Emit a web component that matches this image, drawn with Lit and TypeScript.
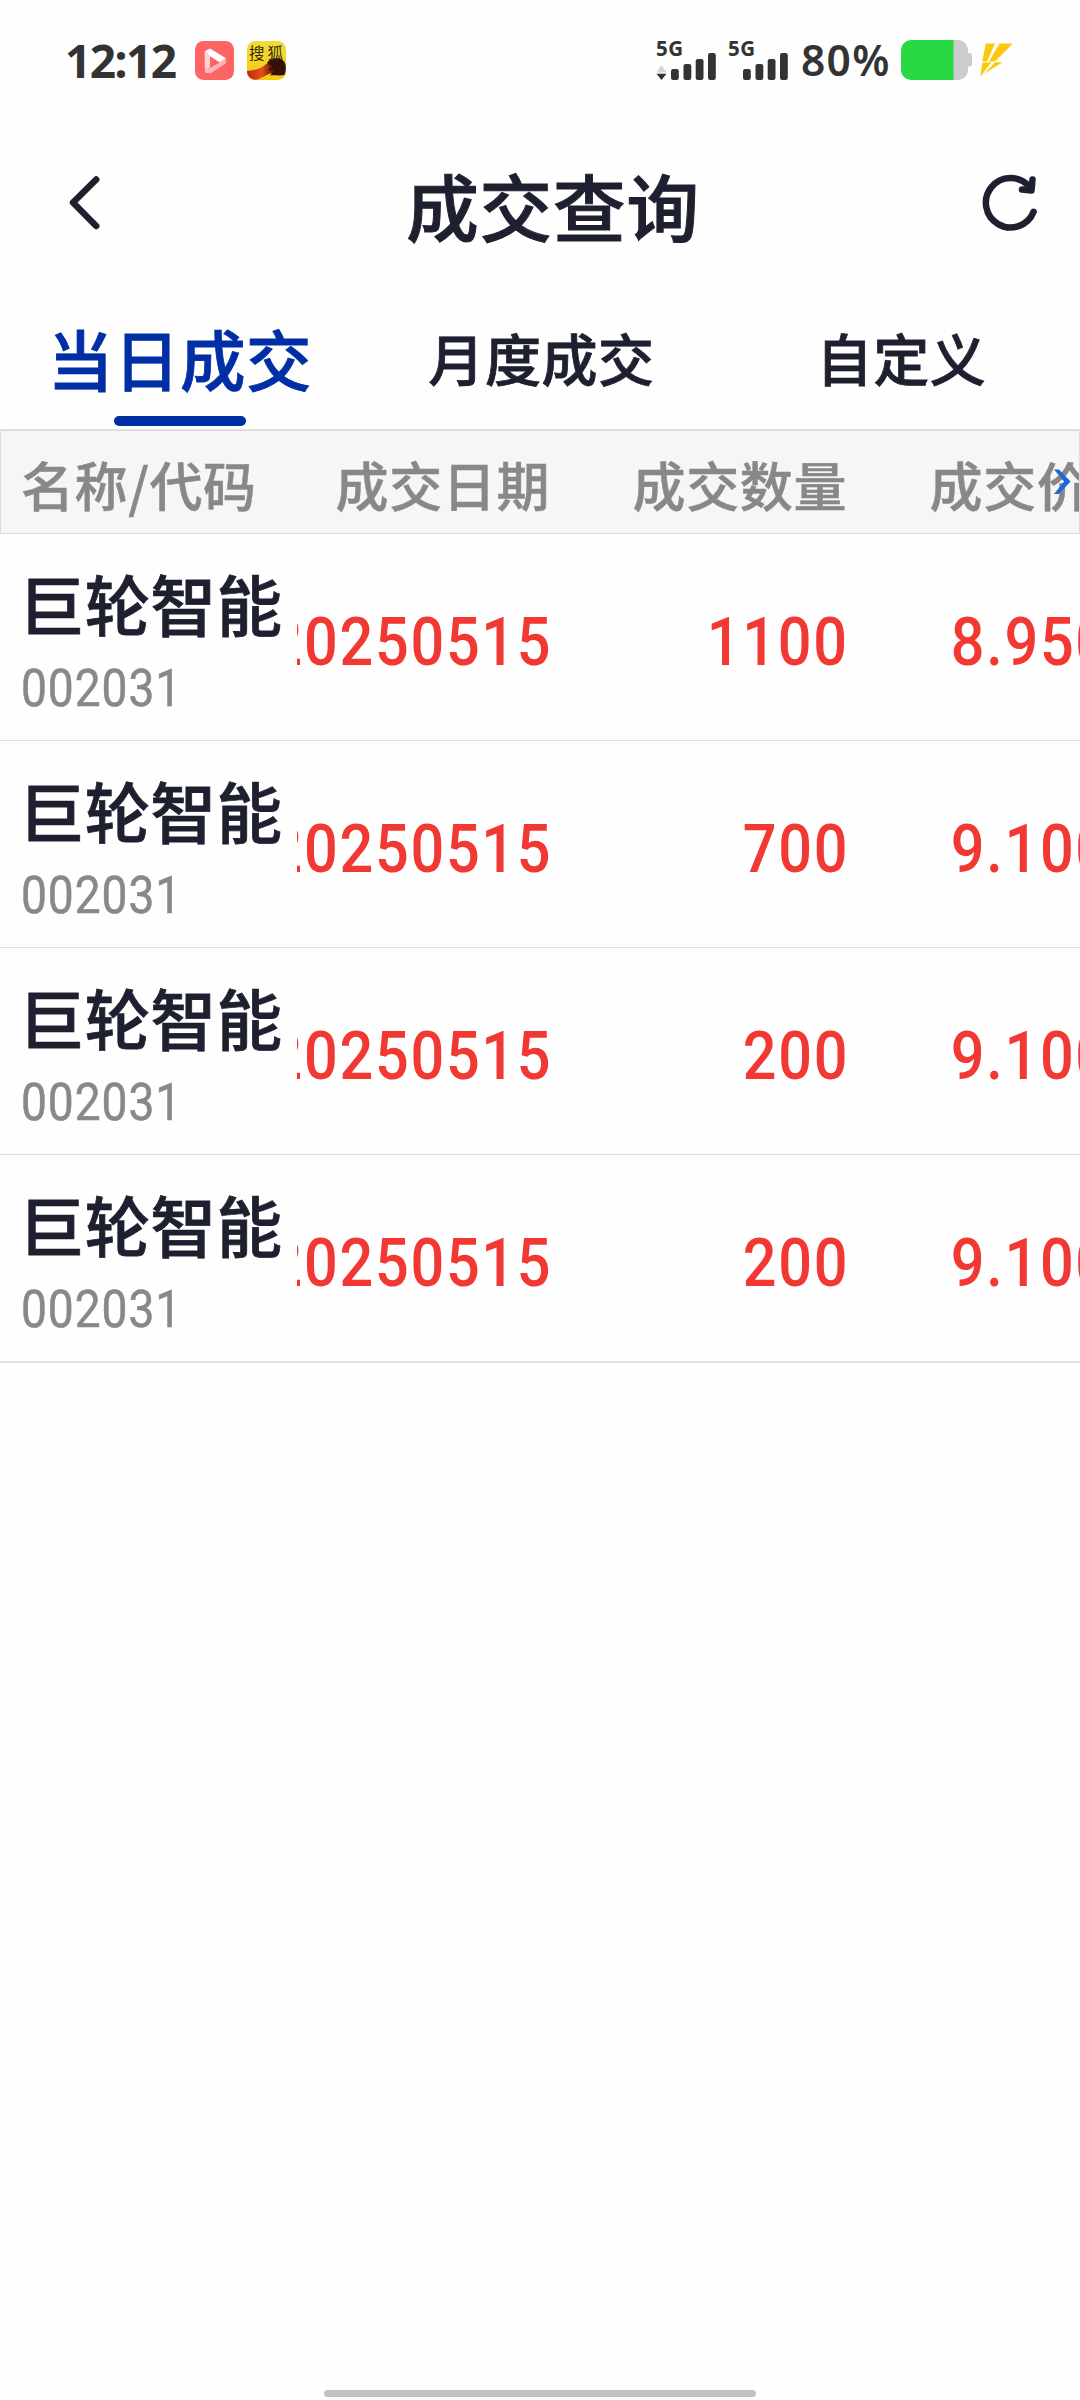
import { LitElement, html, css, svg } from "lit";
import { customElement, property } from "lit/decorators.js";
import { classMap } from "lit/directives/class-map.js";

interface Trade {
  name: string;
  code: string;
  date: string;
  amount: string;
  price: string;
}

const TRADES: Trade[] = [
  { name: "巨轮智能", code: "002031", date: "20250515", amount: "1100", price: "8.9500" },
  { name: "巨轮智能", code: "002031", date: "20250515", amount: "700", price: "9.1000" },
  { name: "巨轮智能", code: "002031", date: "20250515", amount: "200", price: "9.1000" },
  { name: "巨轮智能", code: "002031", date: "20250515", amount: "200", price: "9.1000" },
];

const BARS = [
  { x: 15, y: 29 },
  { x: 27.5, y: 24 },
  { x: 39.7, y: 19 },
  { x: 52, y: 13 },
];

@customElement("status-bar")
export class StatusBar extends LitElement {
  static styles = css`
    :host {
      display: flex;
      align-items: center;
      height: 120px;
      padding: 0 66px 0 65px;
      color: #333;
      font-family: "Noto Sans", "Noto Sans CJK SC", sans-serif;
    }
    svg {
      display: block;
      flex: none;
      overflow: visible;
    }
    .time {
      width: 130px;
      font-size: 46px;
      font-weight: 700;
      line-height: 118px;
      letter-spacing: -1.5px;
    }
    .app + .app {
      margin-left: 13px;
    }
    .fill {
      flex: 1;
    }
    .signal + .signal {
      margin-left: 11px;
    }
    .percent {
      margin-left: 12px;
      width: 100px;
      font-size: 42.5px;
      font-weight: 600;
      line-height: 118px;
      letter-spacing: 1.3px;
    }
    .bolt {
      margin-left: 8px;
    }
    .net {
      font: 700 20.5px "Noto Sans", sans-serif;
      fill: #333;
    }
    .sohu {
      font: 400 15.5px "Noto Sans CJK SC", sans-serif;
      fill: #3a2a08;
    }
  `;

  private signal(arrows: boolean) {
    return html`<svg class="signal" width="61" height="40" viewBox="0 0 61 40">
      <text class="net" x="0" y="15.5" textLength="27">5G</text>
      ${arrows
        ? svg`<path d="M0.5 32.5L5.5 25l5 7.500z" fill="#d6d6d6" /><path d="M0.500 33.800h10L5.500 40z" fill="#333" />`
        : null}
      ${BARS.map((b) => svg`<rect x=${b.x} y=${b.y} width="7.800" height=${40 - b.y} rx="2.200" fill="#333" />`)}
    </svg>`;
  }

  render() {
    return html`
      <span class="time">12:12</span>
      <svg class="app" width="39" height="39" viewBox="0 0 39 39">
        <rect width="39" height="39" rx="8.5" fill="#fe6464" />
        <path d="M10 10L15 7.500L30.500 17v5.500L25 23L15 15.500z" fill="#fff" />
        <path d="M9.500 10l5.500 4.500v17H10z" fill="#ffd3d3" />
        <path d="M10 27.500l5-1.500L30.500 17.500v5L15.500 32.500L10 31z" fill="#ffb5b5" />
        <path d="M15 15.200L24.800 21.500L15 27z" fill="#fe6464" />
      </svg>
      <svg class="app" width="39" height="39" viewBox="0 0 39 39">
        <defs>
          <clipPath id="tile"><rect width="39" height="39" rx="8.5" /></clipPath>
          <linearGradient id="gold" x1="0" y1="0" x2="0" y2="1">
            <stop offset="0" stop-color="#f0dc3c" />
            <stop offset="1" stop-color="#f7c90c" />
          </linearGradient>
          <linearGradient id="tail" x1="0" y1="0" x2="1" y2="0">
            <stop offset="0" stop-color="#c2231a" />
            <stop offset=".5" stop-color="#e2501a" />
            <stop offset=".8" stop-color="#6d1a0c" />
          </linearGradient>
        </defs>
        <g clip-path="url(#tile)">
          <rect width="39" height="39" fill="url(#gold)" />
          <path d="M0 30C8 29 13 28 18 24C22 20 28 20 30 24L26 32C18 33 14 39 7 39H0z" fill="url(#tail)" />
          <path d="M20 22C23 17 33 15 37.500 21C39.500 25 39 30 37.500 34C33 35 28 34 23 34.500L27 29.500L21 29L25.500 25.500z" fill="#35100a" />
        </g>
        <text class="sohu" x="2" y="18.300"><tspan>搜</tspan><tspan x="20.500">狐</tspan></text>
      </svg>
      <span class="fill"></span>
      ${this.signal(true)} ${this.signal(false)}
      <span class="percent">80%</span>
      <svg width="71" height="40" viewBox="0 0 71 40">
        <path d="M52 0h5a10 10 0 0 1 10 10v3h1.500a2.500 2.500 0 0 1 2.500 2.500v8.500a2.500 2.500 0 0 1-2.500 2.500H67v3.500a10 10 0 0 1-10 10h-5z" fill="#ccc" />
        <path d="M10 0h42.500v40H10A10 10 0 0 1 0 30V10A10 10 0 0 1 10 0z" fill="#28d844" />
      </svg>
      <svg class="bolt" width="34" height="34" viewBox="0 0 34 34" fill="#fdc80b">
        <path d="M5.700 0.500H15L7 18.500H2.300z" />
        <path d="M19.500 0.500H32.800L15 18.500H9z" />
        <path d="M2.500 19.800L11.500 19.200L3.500 29.500L0.300 33.200z" />
        <path d="M15 19.200H22.500L0.300 33.300L5 30z" />
      </svg>
    `;
  }
}

@customElement("nav-header")
export class NavHeader extends LitElement {
  static styles = css`
    :host {
      display: grid;
      grid-template-columns: 60px 1fr 60px;
      align-items: center;
      height: 168px;
      padding: 0 38px 0 54px;
      color: #1e2030;
    }
    svg {
      display: block;
    }
    .title {
      margin: 0;
      padding: 2px 0 0 4px;
      margin-right: -6px;
      text-align: center;
      font-size: 72.5px;
      font-weight: 500;
      line-height: 102px;
      letter-spacing: 0.9px;
      -webkit-text-stroke: 1px currentColor;
    }
  `;

  render() {
    return html`
      <svg width="60" height="60" viewBox="0 0 60 60" fill="none" stroke="#1e2030" stroke-width="6.500" stroke-linecap="round" stroke-linejoin="round">
        <path d="M42.200 5.500L19 28.500L42.200 52" />
      </svg>
      <h1 class="title">成交查询</h1>
      <svg width="60" height="60" viewBox="0 0 60 60" fill="none" stroke="#1e2030" stroke-width="6.500" stroke-linecap="round" stroke-linejoin="round">
        <path d="M51.600 37.800A24.700 24.700 0 1 1 47 12.300" />
        <path d="M50.500 5.500L49.500 16.500L40 15.500" />
      </svg>
    `;
  }
}

@customElement("tab-bar")
export class TabBar extends LitElement {
  @property({ type: Number }) active = 0;

  static styles = css`
    :host {
      display: grid;
      grid-template-columns: repeat(3, 1fr);
      height: 141px;
      color: #1e2030;
    }
    .tab {
      display: flex;
      flex-direction: column;
      align-items: center;
      font-size: 56px;
      font-weight: 500;
      letter-spacing: 0.6px;
      -webkit-text-stroke: 0.8px currentColor;
    }
    .label {
      height: 128px;
      margin-top: 4px;
      padding-left: 3px;
      line-height: 129px;
      white-space: nowrap;
    }
    .active {
      color: #002fa5;
      font-size: 65.5px;
    }
    .active .label {
      padding-left: 0;
      line-height: 131px;
    }
    .active::after {
      content: "";
      width: 132px;
      height: 10px;
      margin-top: -4px;
      border-radius: 5px;
      background: #002fa5;
    }
  `;

  render() {
    return ["当日成交", "月度成交", "自定义"].map(
      (t, i) => html`<div class=${classMap({ tab: true, active: i === this.active })}><span class="label">${t}</span></div>`,
    );
  }
}

@customElement("trade-table")
export class TradeTable extends LitElement {
  static styles = css`
    :host {
      display: block;
      border-top: 1px solid #e0e0e0;
    }
    .head,
    .row {
      display: grid;
      grid-template-columns: 297px minmax(0, 1fr);
      box-sizing: border-box;
    }
    .head {
      position: relative;
      height: 104px;
      border: 1px solid #dcdcdc;
      background: #f6f6f6;
      color: #888;
      font-size: 53px;
      font-weight: 500;
      line-height: 106px;
      letter-spacing: 0.6px;
      grid-template-columns: 296px minmax(0, 1fr);
      -webkit-text-stroke: 0.5px currentColor;
    }
    .row {
      height: 207px;
      border-bottom: 1px solid #e0e0e0;
    }
    .row:last-of-type {
      height: 208px;
      border-bottom-width: 2px;
    }
    .pinned {
      padding-left: 21px;
      white-space: nowrap;
    }
    .head .pinned {
      padding-left: 20px;
    }
    .scroller {
      display: flex;
      overflow: hidden;
    }
    .cell {
      display: flex;
      justify-content: flex-end;
      flex: none;
      box-sizing: border-box;
      width: 297px;
      padding-right: 44px;
      white-space: nowrap;
    }
    .name {
      display: block;
      height: 96px;
      margin-left: -2px;
      padding-top: 20px;
      color: #1e2030;
      font-size: 65.5px;
      font-weight: 500;
      line-height: 97px;
      letter-spacing: 0.3px;
      -webkit-text-stroke: 0.8px currentColor;
    }
    .code,
    .value {
      display: block;
      font-family: Roboto, sans-serif;
    }
    .code {
      width: max-content;
      color: #888;
      font-size: 51px;
      line-height: 60px;
      letter-spacing: 1px;
      margin-top: 9px;
      transform: scaleX(0.905);
      transform-origin: left;
      -webkit-text-stroke: 0.5px currentColor;
    }
    .value {
      margin-right: -2px;
      color: #f13832;
      font-size: 66px;
      font-weight: 500;
      line-height: 218px;
      letter-spacing: 1.9px;
      transform: scaleX(0.9);
      transform-origin: right;
    }
    .more {
      position: absolute;
      right: 8px;
      top: 37px;
    }
  `;

  render() {
    return html`
      <div class="head">
        <div class="pinned">名称/代码</div>
        <div class="scroller">
          ${["成交日期", "成交数量", "成交价格"].map((h) => html`<div class="cell">${h}</div>`)}
        </div>
        <svg class="more" width="18" height="27" viewBox="0 0 18 27">
          <path d="M1 1.500H6L17.500 13.500L6 26H1L11 13.500z" fill="#1c68d6" />
        </svg>
      </div>
      ${TRADES.map(
        (t) => html`<div class="row">
          <div class="pinned"><span class="name">${t.name}</span><span class="code">${t.code}</span></div>
          <div class="scroller">
            ${[t.date, t.amount, t.price].map((v) => html`<div class="cell"><span class="value">${v}</span></div>`)}
          </div>
        </div>`,
      )}
    `;
  }
}

@customElement("app-root")
export class AppRoot extends LitElement {
  static styles = css`
    :host {
      display: flex;
      flex-direction: column;
      box-sizing: border-box;
      width: 1080px;
      height: 2400px;
      overflow: hidden;
      background: #fefefe;
      font-family: "Noto Sans CJK SC", sans-serif;
    }
    .content {
      flex: 1;
    }
    .home {
      align-self: center;
      width: 432px;
      height: 7px;
      margin-bottom: 3px;
      border-radius: 4px;
      background: #c2c2c2;
    }
  `;

  render() {
    return html`
      <status-bar></status-bar>
      <nav-header></nav-header>
      <tab-bar .active=${0}></tab-bar>
      <trade-table class="content"></trade-table>
      <div class="home"></div>
    `;
  }
}
